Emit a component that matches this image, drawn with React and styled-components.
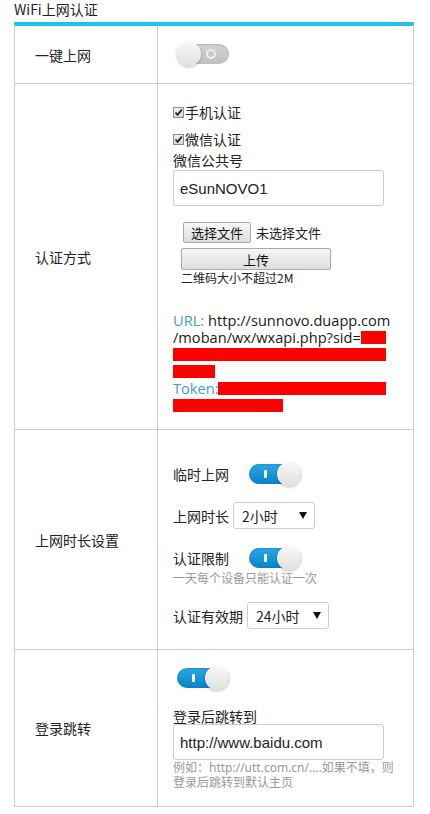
import React from "react";
import styled, { createGlobalStyle } from "styled-components";

const GlobalStyle = createGlobalStyle`
  body {
    margin: 0;
    background: #fff;
    color: #222;
    font-family: "Noto Sans CJK SC", "Noto Sans", sans-serif;
    font-size: 14px;
  }
`;

const Page = styled.div`
  padding-left: 14px;
`;

const Title = styled.div`
  height: 22px;
  line-height: 18px;
  font-size: 14px;
  color: #222;
`;

const Table = styled.div`
  width: 400px;
  box-sizing: border-box;
  border-top: 4px solid #1ec0e6;
  border-left: 1px solid #ccc;
  border-right: 1px solid #ccc;
`;

const Row = styled.div`
  display: grid;
  grid-template-columns: 143px 1fr;
  border-bottom: 1px solid #ccc;
`;

const LabelCell = styled.div`
  box-sizing: border-box;
  border-right: 1px solid #ccc;
  padding-left: 20px;
  display: flex;
  align-items: center;
  line-height: 20px;
`;

const ValueCell = styled.div`
  padding: ${(p) => p.$pad || "16px 15px"};
  display: flex;
  flex-direction: column;
  align-items: flex-start;
`;

const SwitchWrap = styled.span`
  position: relative;
  display: inline-flex;
  align-items: center;
  width: 52px;
  height: 24px;
  margin-left: ${(p) => p.$indent || 0}px;
`;

const Track = styled.span`
  position: relative;
  width: 52px;
  height: 20px;
  border-radius: 10px;
  background: ${(p) =>
    p.$on
      ? "linear-gradient(#2aa9e6, #0a82c6)"
      : "linear-gradient(#d4d4d4, #c0c0c0)"};
  box-shadow: inset 0 1px 2px rgba(0, 0, 0, 0.15);
`;

const Knob = styled.span`
  position: absolute;
  top: 0;
  left: ${(p) => (p.$on ? "28px" : "0")};
  width: 24px;
  height: 24px;
  border-radius: 50%;
  background: linear-gradient(#f8f8f8, #e0e0e0);
  box-shadow: 0 1px 3px rgba(0, 0, 0, 0.28);
`;

const OnMark = styled.span`
  position: absolute;
  left: 15px;
  top: 6px;
  width: 3px;
  height: 8px;
  border-radius: 1px;
  background: #fff;
`;

const OffMark = styled.span`
  position: absolute;
  left: 29px;
  top: 5px;
  width: 6px;
  height: 6px;
  border-radius: 50%;
  border: 2px solid #efefef;
`;

const Switch = ({ on, indent }) => (
  <SwitchWrap $indent={indent}>
    <Track $on={on}>{on ? <OnMark /> : <OffMark />}</Track>
    <Knob $on={on} />
  </SwitchWrap>
);

const CheckLine = styled.label`
  display: flex;
  align-items: center;
  height: 20px;
  line-height: 20px;
  margin-top: ${(p) => p.$top || 0}px;
`;

const CheckBox = styled.span`
  display: inline-flex;
  align-items: center;
  justify-content: center;
  width: 9px;
  height: 9px;
  border: 1px solid #8a8a8a;
  background: linear-gradient(#f2f2f2, #d8d8d8);
  margin-right: 1px;
`;

const Check = () => (
  <CheckBox>
    <svg width="9" height="9" viewBox="0 0 9 9">
      <path d="M1.5 4.5 L3.6 6.8 L7.8 1.6" fill="none" stroke="#222" strokeWidth="1.8" />
    </svg>
  </CheckBox>
);

const FieldLabel = styled.div`
  line-height: ${(p) => p.$lh || 20}px;
  margin-top: ${(p) => p.$top || 0}px;
`;

const TextBox = styled.div`
  box-sizing: border-box;
  width: 211px;
  height: 36px;
  border: 1px solid #ccc;
  border-radius: 3px;
  padding-left: 6px;
  display: flex;
  align-items: center;
  font-family: "Liberation Sans", Arial, sans-serif;
  font-size: 15px;
  color: #222;
`;

const FileArea = styled.div`
  padding-left: 8px;
  margin-top: 16px;
  font-size: 13px;
  display: flex;
  flex-direction: column;
  align-items: flex-start;
`;

const FileRow = styled.div`
  display: flex;
  align-items: center;
  gap: 5px;
  margin-left: 2px;
`;

const GrayButton = styled.span`
  box-sizing: border-box;
  display: inline-flex;
  align-items: center;
  justify-content: center;
  width: ${(p) => p.$w}px;
  height: ${(p) => p.$h}px;
  border: 1px solid #a9a9a9;
  border-radius: 2px;
  background: linear-gradient(#f7f7f7, #dedede);
  font-size: 13px;
  color: #111;
  margin-top: ${(p) => p.$top || 0}px;
`;

const Note = styled.div`
  margin-top: 1px;
  font-size: 12px;
  line-height: 14px;
`;

const UrlBlock = styled.div`
  margin-top: 27px;
  width: 213px;
  font-family: "Open Sans", "Noto Sans", sans-serif;
  font-size: 14.6px;
  color: #1a1a1a;
`;

const UrlLine = styled.div`
  display: flex;
  align-items: center;
  height: 17px;
  line-height: 17px;
  white-space: nowrap;
`;

const Key = styled.span`
  color: #3f9bd8;
  margin-right: ${(p) => p.$gap || 0}px;
`;

const Redact = styled.span`
  display: inline-block;
  height: 13px;
  background: #ff0000;
  ${(p) => (p.$w ? `width: ${p.$w}px;` : "flex: 1;")}
`;

const SettingLine = styled.div`
  display: flex;
  align-items: center;
  gap: ${(p) => p.$gap}px;
  min-height: ${(p) => p.$h}px;
  margin-top: ${(p) => p.$top || 0}px;
  line-height: 20px;
`;

const SelectBox = styled.div`
  box-sizing: border-box;
  width: 82px;
  height: 27px;
  border: 1px solid #ccc;
  border-radius: 3px;
  padding: 0 7px 0 8px;
  display: flex;
  align-items: center;
  justify-content: space-between;
`;

const Select = ({ value }) => (
  <SelectBox>
    <span>{value}</span>
    <svg width="8" height="7" viewBox="0 0 8 7">
      <path d="M0 0 H8 L4 7 Z" fill="#111" />
    </svg>
  </SelectBox>
);

const Hint = styled.div`
  color: #999;
  font-family: "Noto Sans", "Noto Sans CJK SC", sans-serif;
  font-size: 12px;
  line-height: 15px;
  white-space: nowrap;
`;

export default function App() {
  return (
    <Page>
      <GlobalStyle />
      <Title>WiFi上网认证</Title>
      <Table>
        <Row>
          <LabelCell>一键上网</LabelCell>
          <ValueCell $pad="16px 15px 17px">
            <Switch on={false} indent={4} />
          </ValueCell>
        </Row>

        <Row>
          <LabelCell>认证方式</LabelCell>
          <ValueCell $pad="18px 15px 15px">
            <CheckLine>
              <Check />
              手机认证
            </CheckLine>
            <CheckLine $top={7}>
              <Check />
              微信认证
            </CheckLine>
            <FieldLabel $top={1}>微信公共号</FieldLabel>
            <TextBox>eSunNOVO1</TextBox>
            <FileArea>
              <FileRow>
                <GrayButton $w={68} $h={21}>选择文件</GrayButton>
                <span>未选择文件</span>
              </FileRow>
              <GrayButton $w={150} $h={22} $top={5}>上传</GrayButton>
              <Note>二维码大小不超过2M</Note>
            </FileArea>
            <UrlBlock>
              <UrlLine>
                <Key $gap={4}>URL:</Key>http://sunnovo.duapp.com
              </UrlLine>
              <UrlLine>
                /moban/wx/wxapi.php?sid=
                <Redact />
              </UrlLine>
              <UrlLine>
                <Redact />
              </UrlLine>
              <UrlLine>
                <Redact $w={42} />
              </UrlLine>
              <UrlLine>
                <Key>Token:</Key>
                <Redact />
              </UrlLine>
              <UrlLine>
                <Redact $w={110} />
              </UrlLine>
            </UrlBlock>
          </ValueCell>
        </Row>

        <Row>
          <LabelCell>上网时长设置</LabelCell>
          <ValueCell $pad="31px 15px 20px">
            <SettingLine $gap={20} $h={26}>
              临时上网
              <Switch on />
            </SettingLine>
            <SettingLine $gap={4} $h={27} $top={15}>
              上网时长
              <Select value="2小时" />
            </SettingLine>
            <SettingLine $gap={20} $h={26} $top={16}>
              认证限制
              <Switch on />
            </SettingLine>
            <Hint>一天每个设备只能认证一次</Hint>
            <SettingLine $gap={4} $h={27} $top={16}>
              认证有效期
              <Select value="24小时" />
            </SettingLine>
          </ValueCell>
        </Row>

        <Row>
          <LabelCell>登录跳转</LabelCell>
          <ValueCell $pad="16px 15px 16px">
            <Switch on indent={4} />
            <FieldLabel $lh={16} $top={18}>登录后跳转到</FieldLabel>
            <TextBox>http://www.baidu.com</TextBox>
            <Hint>
              例如：http://utt.com.cn/....如果不填，则
              <br />
              登录后跳转到默认主页
            </Hint>
          </ValueCell>
        </Row>
      </Table>
    </Page>
  );
}
